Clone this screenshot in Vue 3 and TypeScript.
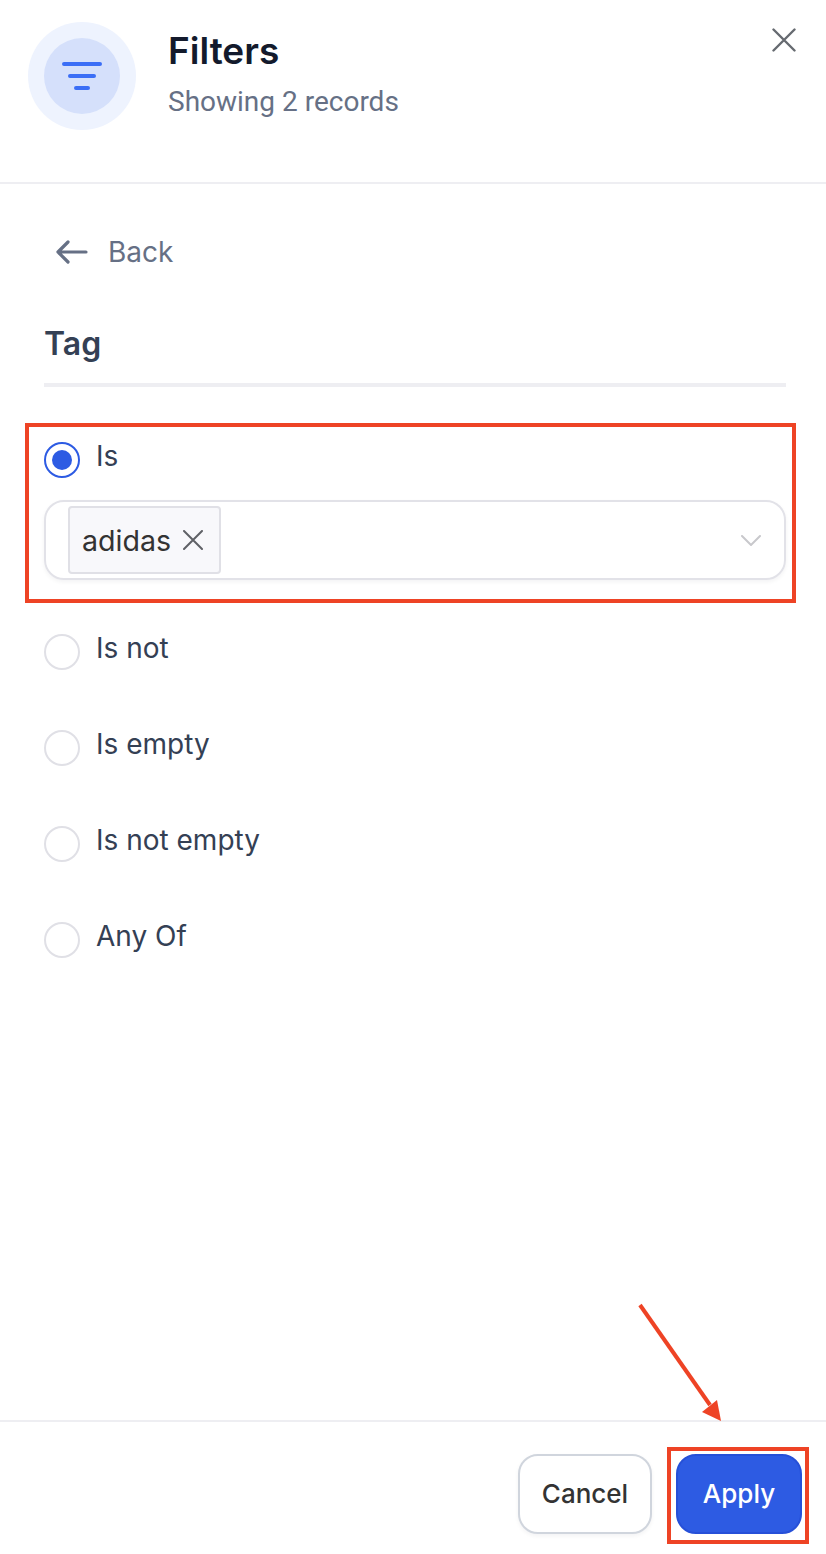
<template>
  <div class="panel">
    <header class="head">
      <div class="halo">
        <div class="disc">
          <svg width="40" height="28" viewBox="0 0 40 28" fill="none" stroke="#3b6ef6" stroke-width="4" stroke-linecap="round">
            <path d="M2 2h36M8 14h24M14 26h12" />
          </svg>
        </div>
      </div>
      <div class="titles">
        <h1>Filters</h1>
        <p>Showing {{ recordCount }} records</p>
      </div>
      <svg class="close" width="24" height="24" viewBox="0 0 24 24" fill="none" stroke="#666a70" stroke-width="2.4" stroke-linecap="round">
        <path d="M1.5 1.5l21 21M22.5 1.5l-21 21" />
      </svg>
    </header>

    <main class="body">
      <div class="back">
        <svg width="32" height="24" viewBox="0 0 32 24" fill="none" stroke="#667085" stroke-width="3.2" stroke-linecap="round" stroke-linejoin="round">
          <path d="M30 12H2M12 2L2 12l10 10" />
        </svg>
        <span>Back</span>
      </div>
      <h2>Tag</h2>

      <div class="options">
        <div v-for="opt in options" :key="opt.label" class="option">
          <div class="radio-row">
            <span class="radio" :class="{ on: opt.selected }"></span>
            <span class="label">{{ opt.label }}</span>
          </div>
          <div v-if="opt.selected" class="select">
            <span class="chip">
              adidas
              <svg width="20" height="20" viewBox="0 0 20 20" fill="none" stroke="#5f6166" stroke-width="2" stroke-linecap="round">
                <path d="M1 1l18 18M19 1L1 19" />
              </svg>
            </span>
            <svg class="chev" width="20" height="11" viewBox="0 0 20 11" fill="none" stroke="#c8c8cc" stroke-width="2" stroke-linecap="round">
              <path d="M1 1l9 9 9-9" />
            </svg>
          </div>
        </div>
      </div>
    </main>

    <footer class="foot">
      <button class="btn cancel">Cancel</button>
      <button class="btn apply">Apply</button>
    </footer>

    <!-- screenshot annotations -->
    <div class="mark mark-select"></div>
    <div class="mark mark-apply"></div>
    <svg class="arrow" width="100" height="130" viewBox="0 0 100 130" fill="none">
      <path d="M2 2L72 102" stroke="#ee4325" stroke-width="4" />
      <path d="M83 118L64 109L79 97Z" fill="#ee4325" />
    </svg>
  </div>
</template>

<script setup lang="ts">
const recordCount = 2;

const options = [
  { label: 'Is', selected: true },
  { label: 'Is not', selected: false },
  { label: 'Is empty', selected: false },
  { label: 'Is not empty', selected: false },
  { label: 'Any Of', selected: false },
];
</script>

<style>
html,
body {
  margin: 0;
  background: #fff;
}
</style>

<style scoped>
.panel {
  position: relative;
  display: flex;
  flex-direction: column;
  width: 826px;
  height: 1554px;
  overflow: hidden;
  background: #fff;
  font-family: Inter, "Liberation Sans", sans-serif;
}

.head {
  position: relative;
  display: flex;
  gap: 32px;
  height: 184px;
  box-sizing: border-box;
  padding: 22px 28px 0;
  border-bottom: 2px solid #eeeef2;
}

.halo {
  display: flex;
  align-items: center;
  justify-content: center;
  width: 108px;
  height: 108px;
  border-radius: 50%;
  background: #eef3fe;
}

.disc {
  display: flex;
  align-items: center;
  justify-content: center;
  width: 76px;
  height: 76px;
  border-radius: 50%;
  background: #d5e0fb;
}

h1 {
  margin: 7px 0 0;
  font-size: 37px;
  line-height: 44px;
  font-weight: 600;
  color: #131a2c;
}

.titles p {
  margin: 11px 0 0;
  font-family: Roboto, sans-serif;
  font-size: 28px;
  line-height: 36px;
  color: #667085;
}

.close {
  position: absolute;
  top: 28px;
  right: 30px;
}

.body {
  flex: 1;
  padding: 0 40px 0 44px;
}

.back {
  display: flex;
  align-items: center;
  gap: 20px;
  height: 40px;
  margin: 48px 0 0 12px;
  font-size: 28px;
  color: #667085;
}

h2 {
  margin: 50px 0 0;
  height: 61px;
  border-bottom: 4px solid #eeeef2;
  font-size: 32px;
  line-height: 44px;
  font-weight: 600;
  color: #344054;
}

.options {
  display: flex;
  flex-direction: column;
  gap: 54px;
  margin-top: 55px;
}

.radio-row {
  display: flex;
  gap: 16px;
  height: 42px;
}

.radio {
  position: relative;
  width: 36px;
  height: 36px;
  box-sizing: border-box;
  border: 2px solid #e0e0e6;
  border-radius: 50%;
}

.radio.on {
  border-color: #2d5be3;
}

.radio.on::after {
  content: "";
  position: absolute;
  inset: 6px;
  border-radius: 50%;
  background: #2d5be3;
}

.label {
  margin-top: -4px;
  font-size: 28px;
  line-height: 36px;
  color: #344054;
}

.select {
  display: flex;
  align-items: center;
  justify-content: space-between;
  box-sizing: border-box;
  height: 80px;
  margin: 16px 0 0;
  padding: 0 23px 0 22px;
  border: 2px solid #e2e2e8;
  border-radius: 20px;
  box-shadow: 0 2px 4px rgba(16, 24, 40, 0.05);
}

.chip {
  display: flex;
  align-items: center;
  gap: 12px;
  box-sizing: border-box;
  height: 68px;
  padding: 0 16px 0 12px;
  border: 2px solid #e0e0e6;
  border-radius: 4px;
  background: #f8f8fb;
  font-size: 28.6px;
  color: #333;
}

.foot {
  display: flex;
  justify-content: flex-end;
  gap: 24px;
  height: 134px;
  box-sizing: border-box;
  padding: 32px 24px 0 0;
  border-top: 2px solid #eeeef2;
}

.btn {
  height: 80px;
  box-sizing: border-box;
  padding: 0 0 2px;
  border-radius: 20px;
  font-family: Inter, sans-serif;
  font-size: 26px;
  font-weight: 500;
}

.cancel {
  width: 134px;
  border: 2px solid #d0d5dd;
  background: #fff;
  color: #333;
  box-shadow: 0 2px 4px rgba(16, 24, 40, 0.05);
}

.apply {
  width: 126px;
  border: 2px solid #2650d8;
  background: #2d5be3;
  color: #fff;
}

.mark {
  position: absolute;
  box-sizing: border-box;
  border: 4px solid #ee4325;
}

.mark-select {
  left: 25px;
  top: 423px;
  width: 771px;
  height: 180px;
}

.mark-apply {
  left: 667px;
  top: 1447px;
  width: 142px;
  height: 97px;
}

.arrow {
  position: absolute;
  left: 638px;
  top: 1303px;
}
</style>
